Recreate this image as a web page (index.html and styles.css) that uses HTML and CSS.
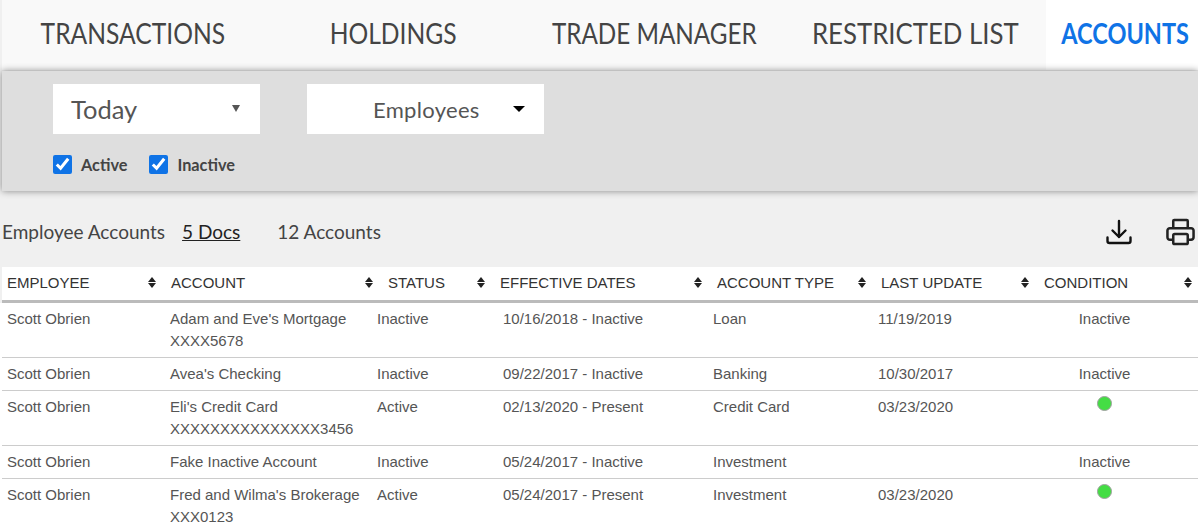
FILE: index.html
```html
<!DOCTYPE html>
<html lang="en">
<head>
<meta charset="utf-8">
<title>Accounts</title>
<link rel="stylesheet" href="styles.css">
</head>
<body>
<nav class="tabs">
  <a class="tab tab-transactions"><span>TRANSACTIONS</span></a>
  <a class="tab tab-holdings"><span>HOLDINGS</span></a>
  <a class="tab tab-trade"><span>TRADE MANAGER</span></a>
  <a class="tab tab-restricted"><span>RESTRICTED LIST</span></a>
  <a class="tab tab-accounts active"><span>ACCOUNTS</span></a>
</nav>
<section class="filters">
  <div class="selects">
    <div class="select select-date"><span>Today</span><i class="caret caret-small"></i></div>
    <div class="select select-people"><span>Employees</span><i class="caret"></i></div>
  </div>
  <div class="checks">
    <label class="check"><input type="checkbox" checked>Active</label>
    <label class="check"><input type="checkbox" checked>Inactive</label>
  </div>
</section>
<section class="summary">
  <span class="summary-title">Employee Accounts</span>
  <a class="summary-docs">5 Docs</a>
  <span class="summary-count">12 Accounts</span>
  <div class="actions">
    <svg class="icon icon-download" viewBox="0 0 26 26" fill="none" stroke="#111" stroke-width="2.400" stroke-linecap="round" stroke-linejoin="round"><path d="M13 2v16M6.500 11.500l6.500 6.500 6.500-6.500M1.500 18.500v3.500a2 2 0 0 0 2 2h19a2 2 0 0 0 2-2v-3.500"/></svg>
    <svg class="icon icon-print" viewBox="0 0 30 28" fill="none" stroke="#222" stroke-width="2.600" stroke-linejoin="round"><path d="M7.500 10V2.500a1 1 0 0 1 1-1h13a1 1 0 0 1 1 1V10M7.500 22H4a2.500 2.500 0 0 1-2.500-2.500v-7A2.500 2.500 0 0 1 4 10h22a2.500 2.500 0 0 1 2.500 2.500v7A2.500 2.500 0 0 1 26 22h-3.500"/><rect x="7.500" y="16" width="15" height="10.500" rx="1.500"/></svg>
  </div>
</section>
<div class="grid-head">
  <div class="th">EMPLOYEE<i class="sort"></i></div>
  <div class="th">ACCOUNT<i class="sort"></i></div>
  <div class="th">STATUS<i class="sort"></i></div>
  <div class="th">EFFECTIVE DATES<i class="sort"></i></div>
  <div class="th">ACCOUNT TYPE<i class="sort"></i></div>
  <div class="th">LAST UPDATE<i class="sort"></i></div>
  <div class="th">CONDITION<i class="sort"></i></div>
</div>
<div class="grid-body">
  <div class="row">
    <div>Scott Obrien</div><div>Adam and Eve's Mortgage<br>XXXX5678</div><div>Inactive</div><div>10/16/2018 - Inactive</div><div>Loan</div><div>11/19/2019</div><div class="cond">Inactive</div>
  </div>
  <div class="row">
    <div>Scott Obrien</div><div>Avea's Checking</div><div>Inactive</div><div>09/22/2017 - Inactive</div><div>Banking</div><div>10/30/2017</div><div class="cond">Inactive</div>
  </div>
  <div class="row">
    <div>Scott Obrien</div><div>Eli's Credit Card<br>XXXXXXXXXXXXXXX3456</div><div>Active</div><div>02/13/2020 - Present</div><div>Credit Card</div><div>03/23/2020</div><div class="cond"><i class="dot"></i></div>
  </div>
  <div class="row">
    <div>Scott Obrien</div><div>Fake Inactive Account</div><div>Inactive</div><div>05/24/2017 - Inactive</div><div>Investment</div><div></div><div class="cond">Inactive</div>
  </div>
  <div class="row">
    <div>Scott Obrien</div><div>Fred and Wilma's Brokerage<br>XXX0123</div><div>Active</div><div>05/24/2017 - Present</div><div>Investment</div><div>03/23/2020</div><div class="cond"><i class="dot"></i></div>
  </div>
</div>
</body>
</html>
```
FILE: styles.css
```css
* { box-sizing: border-box; }
html, body { height: 100%; }
body {
  margin: 0;
  height: 525px;
  overflow: hidden;
  background: #f0f0f0;
  color: #444;
  font-family: "Lato", "Liberation Sans", sans-serif;
}
.tabs {
  display: grid;
  grid-template-columns: 263px 258px 263px 260px 152px;
  height: 70px;
  margin-left: 2px;
  background: #f9f9f9;
}
.tab {
  font-size: 28px;
  line-height: 66px;
  text-align: center;
  color: #444;
  white-space: nowrap;
  overflow: hidden;
}
.tab span { display: inline-block; }
.tab-transactions { padding-right: 1px; }
.tab-transactions span, .tab-holdings span { transform: scaleX(.88); }
.tab-holdings { padding-right: 1px; }
.tab-trade { padding-right: 1px; }
.tab-trade span { transform: scaleX(.865); }
.tab-restricted { padding-right: 2px; }
.tab-restricted span { transform: scaleX(.92); }
.tab-accounts { padding-left: 3px; }
.tab-accounts span { transform: scaleX(.84); }
.tab.active { background: #fff; color: #0f73e6; font-weight: 700; }
.filters {
  position: relative;
  margin: 1px 0 0 2px;
  height: 120px;
  background: #dedede;
  box-shadow: 0 0 7px rgba(0,0,0,.45);
  padding: 13px 0 0 51px;
}
.selects { display: flex; gap: 47px; }
.select {
  height: 50px;
  background: #fff;
  display: flex;
  align-items: center;
  color: #555;
  position: relative;
}
.select-date { width: 207px; padding-left: 18px; font-size: 25.500px; }
.select-people { width: 237px; padding-left: 66px; font-size: 22px; letter-spacing: .3px; }
.caret {
  position: absolute;
  top: 22px;
  right: 19px;
  border: 6px solid transparent;
  border-top: 6px solid #000;
  border-bottom: 0;
}
.caret-small { right: 20px; top: 21px; border-width: 7px 4px 0; border-top-color: #555; }
.checks { display: flex; gap: 22px; margin-top: 19px; }
.check {
  display: flex;
  align-items: center;
  font-size: 16.300px;
  font-weight: 700;
  color: #444;
  height: 22px;
}
.check input { width: 19px; height: 19px; margin: 0 9px 0 0; accent-color: #0f73e6; }
.summary {
  display: flex;
  align-items: center;
  height: 76px;
  padding: 5px 0 0 2px;
  font-size: 19px;
  color: #444;
}
.summary-docs { margin-left: 17px; text-decoration: underline; color: #222; }
.summary-count { margin-left: 37px; }
.actions { display: flex; align-items: center; gap: 34px; margin-left: auto; padding: 1px 3px 0 0; }
.icon-download { width: 26px; height: 26px; }
.icon-print { width: 29px; height: 28px; }
.grid-head, .row { display: grid; margin-left: 2px; font-family: "Liberation Sans", Arial, sans-serif; }
.grid-head {
  grid-template-columns: 164px 217px 112px 217px 164px 163px 159px;
  height: 36px;
  background: #fff;
  border-bottom: 3px solid #bbb;
}
.th {
  position: relative;
  padding: 7px 0 0 5px;
  font-size: 15px;
  line-height: 18px;
  color: #333;
}
.sort {
  position: absolute;
  top: 10px;
  right: 9px;
  width: 9px;
  height: 11px;
}
.th:last-child .sort { right: 5px; }
.sort::before, .sort::after {
  content: "";
  position: absolute;
  left: 0;
  border-left: 4.500px solid transparent;
  border-right: 4.500px solid transparent;
}
.sort::before { top: 0; border-bottom: 5px solid #222; }
.sort::after { bottom: 0; border-top: 5px solid #222; }
.grid-body { background: #fff; }
.row {
  grid-template-columns: 163px 207px 126px 210px 165px 138px 187px;
  border-bottom: 1px solid #ccc;
  padding: 5px 0;
  font-size: 15px;
  line-height: 22px;
  color: #555;
}
.row > div { padding-left: 5px; white-space: nowrap; }
.row > .cond { padding-left: 0; text-align: center; }
.dot {
  display: inline-block;
  width: 15px;
  height: 15px;
  border-radius: 50%;
  background: #44dd44;
  border: 1px solid #a0a0a0;
  vertical-align: top;
}
```
